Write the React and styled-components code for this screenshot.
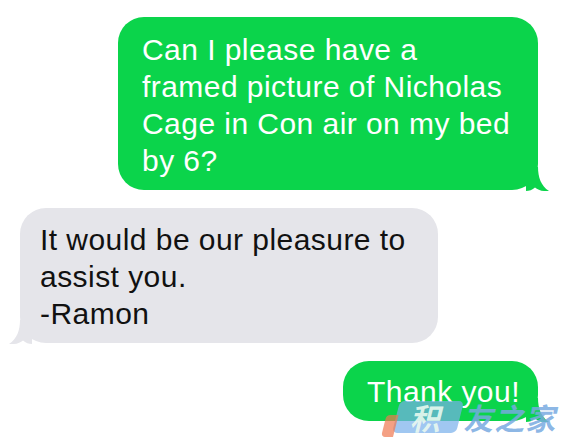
import React from "react";
import styled, { createGlobalStyle } from "styled-components";

const Global = createGlobalStyle`
  html, body { margin: 0; padding: 0; background: #ffffff; }
  body { font-family: "Liberation Sans", Arial, sans-serif; }
`;

const Thread = styled.div`
  position: relative;
  width: 570px;
  height: 439px;
  overflow: hidden;
  box-sizing: border-box;
  padding-top: 17px;
  display: flex;
  flex-direction: column;
  gap: 18px;
  background: #ffffff;
`;

const Row = styled.div`
  display: flex;
  justify-content: ${(p) => (p.$out ? "flex-end" : "flex-start")};
  padding: ${(p) => (p.$out ? "0 32px 0 0" : "0 0 0 20px")};
`;

const Bubble = styled.div`
  position: relative;
  box-sizing: border-box;
  width: ${(p) => p.$w}px;
  border-radius: 26px;
  padding: ${(p) => p.$pt}px 20px 11px ${(p) => (p.$out ? "24px" : "20px")};
  background: ${(p) => (p.$out ? "#0bd44b" : "#e5e5ea")};
  color: ${(p) => (p.$out ? "#ffffff" : "#111111")};
  font-size: 30px;
  line-height: 37px;
  letter-spacing: 0.45px;
  white-space: nowrap;
`;

const Line = styled.div``;

const Tail = styled.svg`
  position: absolute;
  bottom: -1px;
  width: 24px;
  height: 24px;
  ${(p) => (p.$out ? "right: -12px;" : "left: -12px; transform: scaleX(-1);")}
`;

const BubbleTail = ({ out }) => (
  <Tail $out={out} viewBox="0 0 24 24">
    <path
      d="M0 0 H12 C12 10 15 19 23 24 C17 24.6 12 23 9 20.4 C6.5 22.6 3 24 0 24 Z"
      fill={out ? "#0bd44b" : "#e5e5ea"}
    />
  </Tail>
);

const Watermark = styled.div`
  position: absolute;
  left: 388px;
  top: 401px;
  display: flex;
  align-items: center;
  gap: 6px;
  pointer-events: none;
`;

const Badge = styled.div`
  position: relative;
  width: 64px;
  height: 32px;
  margin-left: 8px;
  border-radius: 5px;
  background: rgba(120, 175, 235, 0.7);
  transform: skewX(-14deg);
  display: flex;
  align-items: center;
  justify-content: center;
  &::before {
    content: "";
    position: absolute;
    left: -10px;
    top: 14px;
    width: 12px;
    height: 22px;
    border-radius: 4px 0 0 4px;
    background: rgba(240, 120, 80, 0.7);
  }
`;

const BadgeText = styled.span`
  font-family: "Noto Sans CJK SC", sans-serif;
  font-weight: 700;
  font-size: 30px;
  line-height: 32px;
  color: rgba(235, 250, 240, 0.9);
`;

const WmText = styled.span`
  font-family: "Noto Sans CJK SC", sans-serif;
  font-weight: 700;
  font-size: 30px;
  line-height: 32px;
  letter-spacing: 1px;
  color: rgba(120, 170, 225, 0.85);
  transform: skewX(-12deg);
  display: inline-block;
`;

export default function App() {
  return (
    <>
      <Global />
      <Thread>
        <Row $out>
          <Bubble $out $w={420} $pt={14}>
            <Line>Can I please have a</Line>
            <Line>framed picture of Nicholas</Line>
            <Line>Cage in Con air on my bed</Line>
            <Line>by 6?</Line>
            <BubbleTail out />
          </Bubble>
        </Row>
        <Row>
          <Bubble $w={418} $pt={13}>
            <Line>It would be our pleasure to</Line>
            <Line>assist you.</Line>
            <Line>-Ramon</Line>
            <BubbleTail />
          </Bubble>
        </Row>
        <Row $out>
          <Bubble $out $w={195} $pt={12}>
            <Line>Thank you!</Line>
            <BubbleTail out />
          </Bubble>
        </Row>
        <Watermark>
          <Badge>
            <BadgeText>积</BadgeText>
          </Badge>
          <WmText>友之家</WmText>
        </Watermark>
      </Thread>
    </>
  );
}
